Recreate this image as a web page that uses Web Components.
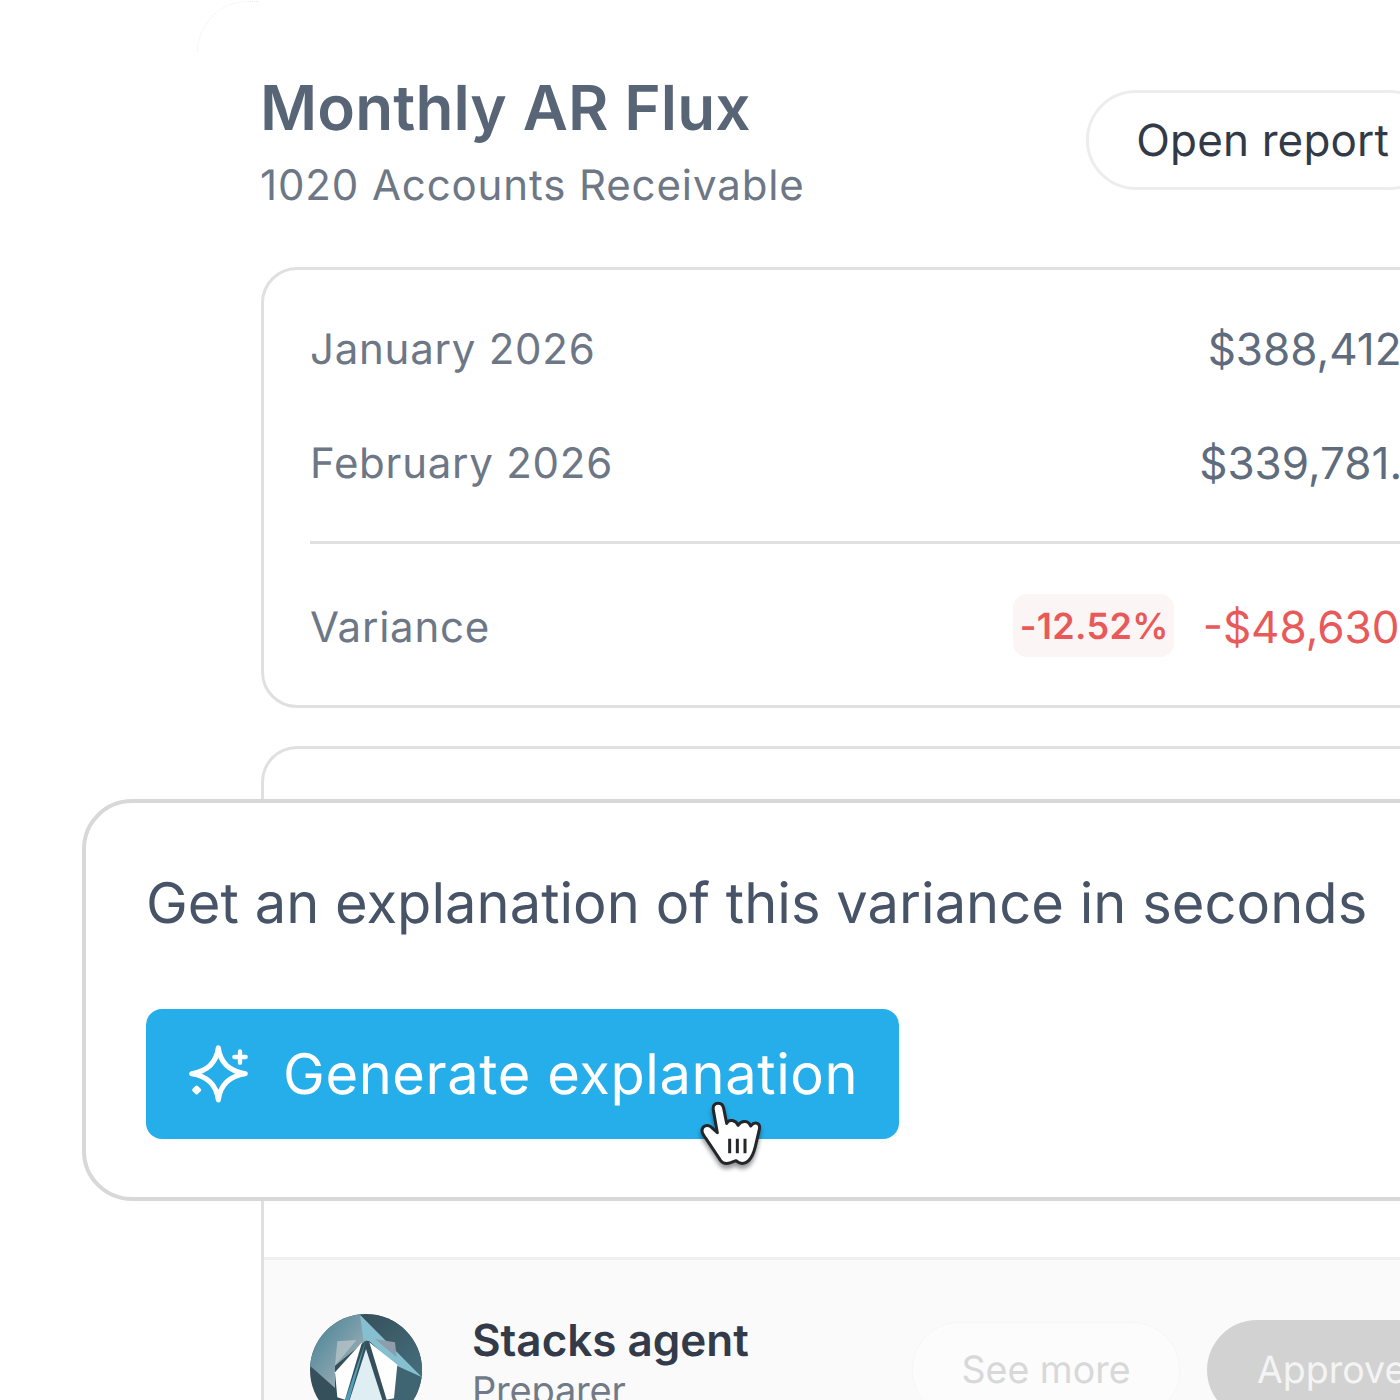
<!doctype html>
<html><head><meta charset="utf-8"><title>Monthly AR Flux</title>
<style>html,body{margin:0;background:#fff}body{font-family:Inter,"Liberation Sans",sans-serif;text-rendering:geometricPrecision}</style>
</head><body>
<x-page>
  <x-report>
    <x-header slot="header" title-text="Monthly AR Flux" sub="1020 Accounts Receivable"><x-pill variant="outline">Open report</x-pill></x-header>
    <x-panel>
      <x-row label="January 2026" value="$388,412.10"></x-row>
      <x-row label="February 2026" value="$339,781.60"></x-row>
      <x-variance label="Variance" pct="-12.52%" value="-$48,630.50"></x-variance>
    </x-panel>
    <x-review>
      <x-agent slot="footer" name="Stacks agent" role="Preparer"></x-agent>
    </x-review>
  </x-report>
  <x-dialog text="Get an explanation of this variance in seconds" action="Generate explanation"></x-dialog>
</x-page>
<script>
function def(name,html,init){customElements.define(name,class extends HTMLElement{constructor(){super();const s=this.attachShadow({mode:'open'});const t=document.createElement('template');t.innerHTML=html;s.appendChild(t.content.cloneNode(true));}connectedCallback(){init&&init(this,this.shadowRoot)}})}
const txt=(s,sel,v)=>{s.querySelector(sel).textContent=v};

def('x-page',`<style>:host{display:block;position:relative;width:1400px;height:1400px;overflow:hidden;background:#fff}</style><slot></slot>`);

def('x-report',`<style>
:host{display:block;box-sizing:border-box;width:1400px;margin-left:197px;padding:72px 0 0 64px;height:1500px;position:relative}
.edge{position:absolute;left:0;top:1px;width:60px;height:50px;border-left:1px dotted #ececec;border-top:1px dotted #ececec;border-radius:56px 0 0 0}
.body{display:flex;flex-direction:column;gap:38px;width:1263px}
</style><div class="edge"></div><div class="body"><slot name="header"></slot><slot></slot></div>`);

def('x-header',`<style>
:host{display:flex;justify-content:space-between;align-items:center;margin-bottom:17px;padding-right:85px}
h1{margin:0 0 0 -1px;font:600 62px/72px Inter,sans-serif;letter-spacing:.13px;color:#586577}
p{margin:16px 0 0 -1px;font:400 42px/52px Inter,sans-serif;color:#6d7786;letter-spacing:.88px}
::slotted(*){margin-bottom:4px}
</style><div><h1></h1><p></p></div><slot></slot>`,(e,s)=>{txt(s,'h1',e.getAttribute('title-text'));txt(s,'p',e.getAttribute('sub'))});

def('x-pill',`<style>
:host{display:inline-flex;align-items:center;justify-content:center;box-sizing:border-box;border-radius:60px;font-family:Inter,sans-serif;white-space:nowrap;flex:none}
:host([variant=outline]){border:3px solid #ededed;height:100px;padding:0 47px;font-size:44px;letter-spacing:.15px;font-weight:400;color:#323a48}
:host([variant=ghost]){border:1px dotted #f0f0f0;height:96px;width:268px;font-size:37.5px;color:#d8d8d8;background:#fcfcfc}
:host([variant=solid]){height:100px;width:260px;padding-left:50px;justify-content:flex-start;font-size:37.5px;color:#f4f4f4;background:#d2d2d2}
</style><slot></slot>`);

def('x-panel',`<style>
:host{display:flex;flex-direction:column;box-sizing:border-box;height:441px;padding:22px 65px 0 46px;border:3px solid #e0e0e0;border-radius:36px 0 0 36px}
</style><slot></slot>`);

def('x-row',`<style>
:host{display:flex;flex:none;justify-content:space-between;align-items:center;height:114px;font:400 42px Inter,sans-serif;letter-spacing:.75px;color:#6d7786;white-space:nowrap}
.v{color:#5f6c7e;font-size:44px;letter-spacing:0}
</style><span class="l"></span><span class="v"></span>`,(e,s)=>{txt(s,'.l',e.getAttribute('label'));txt(s,'.v',e.getAttribute('value'))});

def('x-variance',`<style>
:host{display:flex;flex:none;justify-content:space-between;align-items:center;height:166px;margin-top:21px;border-top:3px solid #e0e0e0;font:400 42px Inter,sans-serif;letter-spacing:.75px;color:#6d7786;white-space:nowrap}
.r{display:flex;align-items:center;gap:29px;color:#e85a5a;margin-right:-9px}
.v{font-size:44px;letter-spacing:0}
.b{background:#fbf5f5;border-radius:14px;padding:0 5px 0 7px;height:63px;margin-bottom:3px;display:flex;align-items:center;font-size:36px;font-weight:600;letter-spacing:.3px}
</style><span class="l"></span><span class="r"><span class="b"></span><span class="v"></span></span>`,(e,s)=>{txt(s,'.l',e.getAttribute('label'));txt(s,'.b',e.getAttribute('pct'));txt(s,'.v',e.getAttribute('value'))});

def('x-review',`<style>
:host{display:flex;flex-direction:column;box-sizing:border-box;height:800px;border:3px solid #e0e0e0;border-right:0;border-radius:36px 0 0 0}
.s{height:508px}
.f{flex:1;background:#fafafa;border-top:3px solid #efefef}
</style><div class="s"></div><div class="f"><slot name="footer"></slot></div>`);

def('x-agent',`<style>
:host{display:flex;align-items:flex-start;padding:54px 0 0 46px;gap:50px;font-family:Inter,sans-serif}
.t{width:390px}
.n{font:600 44px/52px Inter,sans-serif;color:#333a49}
.r{font:400 38px/44px Inter,sans-serif;letter-spacing:-.2px;color:#717a88;margin-top:3px}
.acts{display:flex;align-items:center;gap:27px;padding-top:6px}
svg{display:block;flex:none}
</style>
<svg width="112" height="112" viewBox="180 190 336 336"><defs>
<clipPath id="c"><circle cx="348" cy="358" r="168"/></clipPath>
<linearGradient id="g" x1="0" y1="0" x2="1" y2="1"><stop offset="0" stop-color="#3f7f93"/><stop offset=".55" stop-color="#7f9fab"/><stop offset="1" stop-color="#b7c0c4"/></linearGradient>
<linearGradient id="g2" x1="0" y1="0" x2="1" y2="1"><stop offset="0" stop-color="#35505a"/><stop offset="1" stop-color="#466e7d"/></linearGradient>
</defs><g clip-path="url(#c)">
<rect x="180" y="190" width="336" height="336" fill="#35505a"/>
<polygon points="180,190 330,190 350,268 255,345 255,412 180,345" fill="url(#g)"/>
<polygon points="330,192 516,190 516,380" fill="url(#g2)"/>
<polygon points="262,272 320,268 255,345" fill="#b9c6ca" opacity=".75"/>
<polygon points="516,380 440,345 415,450 516,526" fill="#3f6472"/>
<polygon points="330,192 516,380 440,345 358,272 340,268" fill="#85bfd0"/>
<polygon points="375,265 435,275 440,320" fill="#8e9dab"/>
<polygon points="348,268 285,450 412,450 420,526 276,526" fill="#4f9fba"/>
<polygon points="348,295 274,526 422,526" fill="#dfeef3"/>
<polygon points="336,275 255,365 262,440 285,447" fill="#fff"/>
<polygon points="358,275 442,342 432,443 410,447" fill="#fff"/>
</g></svg>
<div class="t"><div class="n"></div><div class="r"></div></div>
<div class="acts"><x-pill variant="ghost">See more</x-pill><x-pill variant="solid">Approve</x-pill></div>`,(e,s)=>{txt(s,'.n',e.getAttribute('name'));txt(s,'.r',e.getAttribute('role'))});

def('x-dialog',`<style>
:host{position:absolute;left:82px;top:799px;box-sizing:border-box;width:1400px;height:402px;padding:66px 0 0 60px;background:#fff;border:4px solid #d8d8d8;border-radius:50px;display:block;font-family:Inter,sans-serif}
p{margin:0 0 72px;font:400 56px/68px Inter,sans-serif;letter-spacing:.04px;color:#475467;white-space:nowrap}
button{all:unset;display:flex;align-items:center;gap:33px;box-sizing:border-box;width:753px;height:130px;padding-left:42px;background:#26aeea;border-radius:16px;color:#fff;font:400 56px Inter,sans-serif;letter-spacing:.6px;white-space:nowrap}
svg{display:block;flex:none}
.cur{position:absolute;left:594px;top:287px;filter:drop-shadow(0 4px 2px rgba(0,0,0,.4))}
</style><p></p><button><svg width="62" height="62" viewBox="55 45 186 186" fill="none"><path d="M146 59C152 105 178 130 227 137C178 144 152 169 146 216C140 169 114 144 66 137C114 130 140 105 146 59Z" stroke="#fff" stroke-width="15" stroke-linejoin="round"/><path d="M211 70V104M194 87H228" stroke="#fff" stroke-width="13" stroke-linecap="round"/><rect x="70" y="175" width="22" height="22" rx="5" transform="rotate(45 81 186)" fill="#fff"/></svg><span></span></button>
<svg class="cur" width="100" height="90" viewBox="0 0 300 270"><path d="M115 40C103 40 98 48 100 60L112 128L92 110C82 102 66 108 66 122C66 130 72 138 78 146L122 212C128 220 140 222 152 218L168 212C178 222 194 224 206 212C218 200 222 186 226 170L238 118C242 100 226 92 212 108C206 92 186 88 174 106C168 90 146 86 140 100L131 55C129 45 123 40 115 40Z" fill="#fff" stroke="#23262b" stroke-width="9" stroke-linejoin="round"/><path d="M149 146V190M172 146V190M195 146V190" stroke="#23262b" stroke-width="9"/></svg>`,(e,s)=>{txt(s,'p',e.getAttribute('text'));txt(s,'button span',e.getAttribute('action'))});
</script>
</body></html>
